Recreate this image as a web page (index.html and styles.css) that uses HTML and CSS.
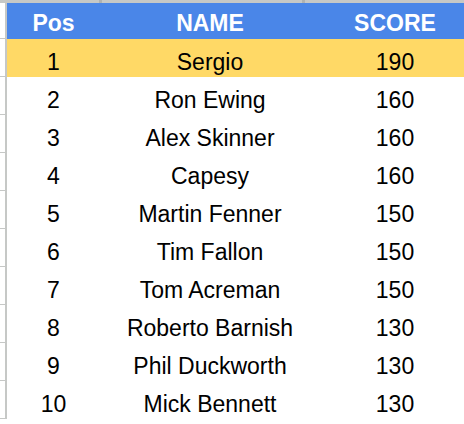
FILE: index.html
```html
<!DOCTYPE html>
<html>
<head>
<meta charset="utf-8">
<link rel="stylesheet" href="styles.css">
</head>
<body>
<div class="topbar"><span class="tick tick-a"></span><span class="tick tick-b"></span></div>
<div class="sheet">
  <div class="gutter">
    <div class="gcell head"></div>
    <div class="gcell"></div><div class="gcell"></div><div class="gcell"></div><div class="gcell"></div><div class="gcell"></div>
    <div class="gcell"></div><div class="gcell"></div><div class="gcell"></div><div class="gcell"></div><div class="gcell"></div>
  </div>
  <div class="table">
    <div class="row header"><div class="c">Pos</div><div class="c">NAME</div><div class="c">SCORE</div></div>
    <div class="row first"><div class="c">1</div><div class="c">Sergio</div><div class="c">190</div></div>
    <div class="row"><div class="c">2</div><div class="c">Ron Ewing</div><div class="c">160</div></div>
    <div class="row"><div class="c">3</div><div class="c">Alex Skinner</div><div class="c">160</div></div>
    <div class="row"><div class="c">4</div><div class="c">Capesy</div><div class="c">160</div></div>
    <div class="row"><div class="c">5</div><div class="c">Martin Fenner</div><div class="c">150</div></div>
    <div class="row"><div class="c">6</div><div class="c">Tim Fallon</div><div class="c">150</div></div>
    <div class="row"><div class="c">7</div><div class="c">Tom Acreman</div><div class="c">150</div></div>
    <div class="row"><div class="c">8</div><div class="c">Roberto Barnish</div><div class="c">130</div></div>
    <div class="row"><div class="c">9</div><div class="c">Phil Duckworth</div><div class="c">130</div></div>
    <div class="row"><div class="c">10</div><div class="c">Mick Bennett</div><div class="c">130</div></div>
  </div>
</div>
</body>
</html>
```
FILE: styles.css
```css
html, body {
  margin: 0;
  padding: 0;
  background: #ffffff;
  width: 464px;
  height: 424px;
  overflow: hidden;
}
body {
  font-family: "Liberation Sans", Arial, sans-serif;
}
.topbar {
  height: 3px;
  background: #c6c8c6;
  position: relative;
}
.tick {
  position: absolute;
  top: 0;
  width: 3px;
  height: 3px;
  background: #b0b2b0;
}
.tick-a { left: 99px; }
.tick-b { left: 302px; }
.sheet {
  display: flex;
}
.gutter {
  width: 5px;
  border-right: 2px solid #c6c8c6;
  display: flex;
  flex-direction: column;
  flex: none;
}
.gcell {
  height: 38px;
  box-sizing: border-box;
  border-bottom: 1px solid #c6c8c6;
}
.gcell.head {
  height: 36px;
}
.table {
  flex: 1;
  overflow: hidden;
}
.row {
  display: grid;
  grid-template-columns: 93px 220px 150px;
  height: 38px;
  box-sizing: border-box;
  align-items: end;
  padding-bottom: 2px;
  font-size: 23px;
  line-height: 26px;
  color: #000000;
}
.row.header {
  height: 36px;
  background: #4a86e8;
  color: #ffffff;
  font-weight: bold;
  padding-bottom: 3px;
}
.row.first {
  background: #ffd966;
}
.c {
  text-align: center;
  white-space: nowrap;
}
```
